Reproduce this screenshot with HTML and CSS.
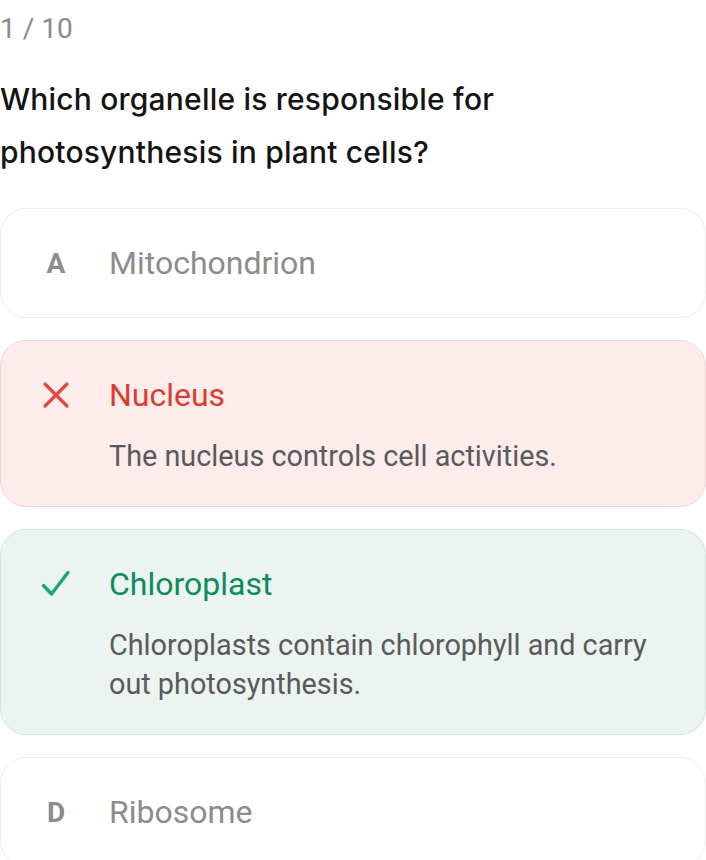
FILE: index.html
```html
<!DOCTYPE html>
<html lang="en">
<head>
    <meta charset="UTF-8">
    <meta name="viewport" content="width=device-width, initial-scale=1.0">
    <title>Quiz</title>
<link rel="stylesheet" href="styles.css">
</head>
<body>
    <div class="quiz">
        <div class="counter">1 / 10</div>
        <h1 class="question">Which organelle is responsible for photosynthesis in plant cells?</h1>

        <div class="options">
            <div class="option">
                <div class="row">
                    <span class="mark letter">A</span>
                    <span class="label">Mitochondrion</span>
                </div>
            </div>

            <div class="option wrong">
                <div class="row">
                    <span class="mark">
                        <svg width="28" height="28" viewBox="0 0 28 28"><path d="M3 3 L25 25 M25 3 L3 25" stroke="currentColor" stroke-width="3.2" stroke-linecap="round" fill="none"/></svg>
                    </span>
                    <span class="label">Nucleus</span>
                </div>
                <p class="note">The nucleus controls cell activities.</p>
            </div>

            <div class="option right">
                <div class="row">
                    <span class="mark">
                        <svg width="30" height="28" viewBox="0 0 30 28"><path d="M2.5 15.5 L10.5 24 L27 2.5" stroke="currentColor" stroke-width="3.4" stroke-linecap="round" stroke-linejoin="round" fill="none"/></svg>
                    </span>
                    <span class="label">Chloroplast</span>
                </div>
                <p class="note">Chloroplasts contain chlorophyll and carry out photosynthesis.</p>
            </div>

            <div class="option">
                <div class="row">
                    <span class="mark letter">D</span>
                    <span class="label">Ribosome</span>
                </div>
            </div>
        </div>
    </div>
</body>
</html>
```

FILE: styles.css
```css
body{margin:0;background:#fff;font-family:Roboto,"Liberation Sans",sans-serif;}
.quiz{padding-top:8px;}
.counter{font-size:28px;line-height:42px;color:#8a8a8a;}
.question{font-family:Inter,"Liberation Sans",sans-serif;font-weight:500;font-size:30px;line-height:53px;color:#141414;margin:23px 0 29px;letter-spacing:0.2px;}
.options{display:flex;flex-direction:column;gap:22px;}
.option{border:1px solid #eeeeee;border-radius:26px;padding:30px;background:#fff;}
.row{display:flex;align-items:center;}
.mark{width:50px;display:flex;justify-content:center;align-items:center;flex:none;margin-right:28px;height:48px;}
.letter{font-size:28px;font-weight:700;color:#8c8c8c;}
.label{font-size:32px;line-height:48px;color:#8c8c8c;}
.note{margin:18px 0 0 78px;font-size:28.8px;line-height:39px;color:#5a5a5a;}
.wrong{background:#fcecec;border-color:#ecd8d8;}
.wrong .label{color:#dd3b30;}
.wrong .mark{color:#e5483e;}
.right{background:#ebf4f1;border-color:#d6e2dd;}
.right .label{color:#0f8a5c;}
.right .mark{color:#1fa86e;}
```
